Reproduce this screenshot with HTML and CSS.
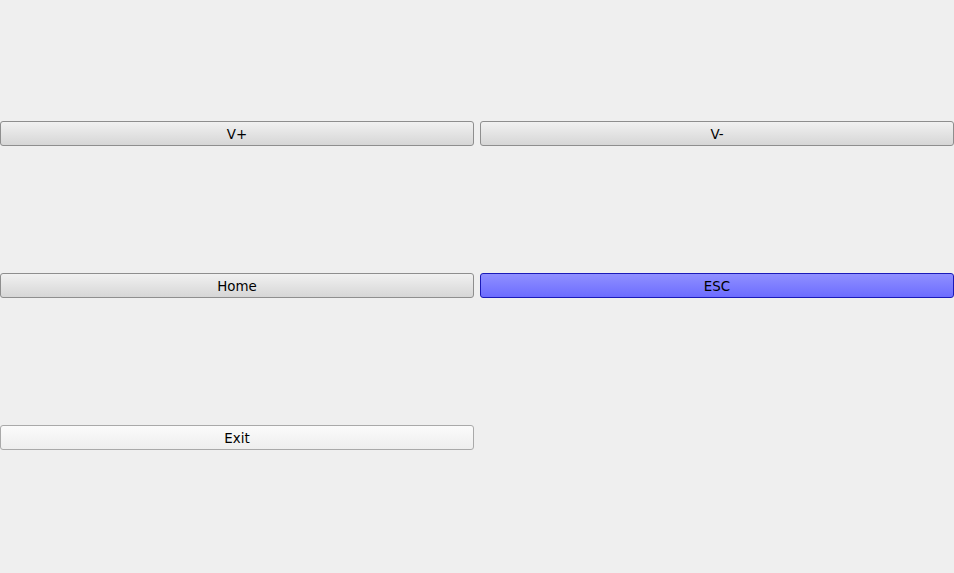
FILE: index.html
```html
<!DOCTYPE html>
<html>
<head>
<meta charset="utf-8">
<link rel="stylesheet" href="styles.css">
</head>
<body>
<div class="grid">
  <button class="btn">V+</button>
  <button class="btn">V-</button>
  <button class="btn">Home</button>
  <button class="btn btn-active">ESC</button>
  <button class="btn btn-light">Exit</button>
</div>
</body>
</html>
```
FILE: styles.css
```css
html, body {
  margin: 0;
  padding: 0;
  background: #efefef;
  width: 954px;
  height: 573px;
  overflow: hidden;
}
.grid {
  display: grid;
  grid-template-columns: 474px 474px;
  column-gap: 6px;
  row-gap: 127px;
  padding-top: 121px;
}
.btn {
  height: 25px;
  margin: 0;
  padding: 2px 0 0 0;
  box-sizing: border-box;
  border: 1px solid #8e8e8e;
  border-radius: 3px;
  background: linear-gradient(to bottom, #f1f1f1, #d6d6d6);
  font-family: "DejaVu Sans", sans-serif;
  font-size: 13.4px;
  line-height: 20px;
  color: #000;
  text-align: center;
}
.btn-active {
  border-color: #1a1ab8;
  background: linear-gradient(to bottom, #9090ff, #6c6cff);
}
.btn-light {
  border-color: #a9a9a9;
  background: linear-gradient(to bottom, #fbfbfb, #eeeeee);
}
```
